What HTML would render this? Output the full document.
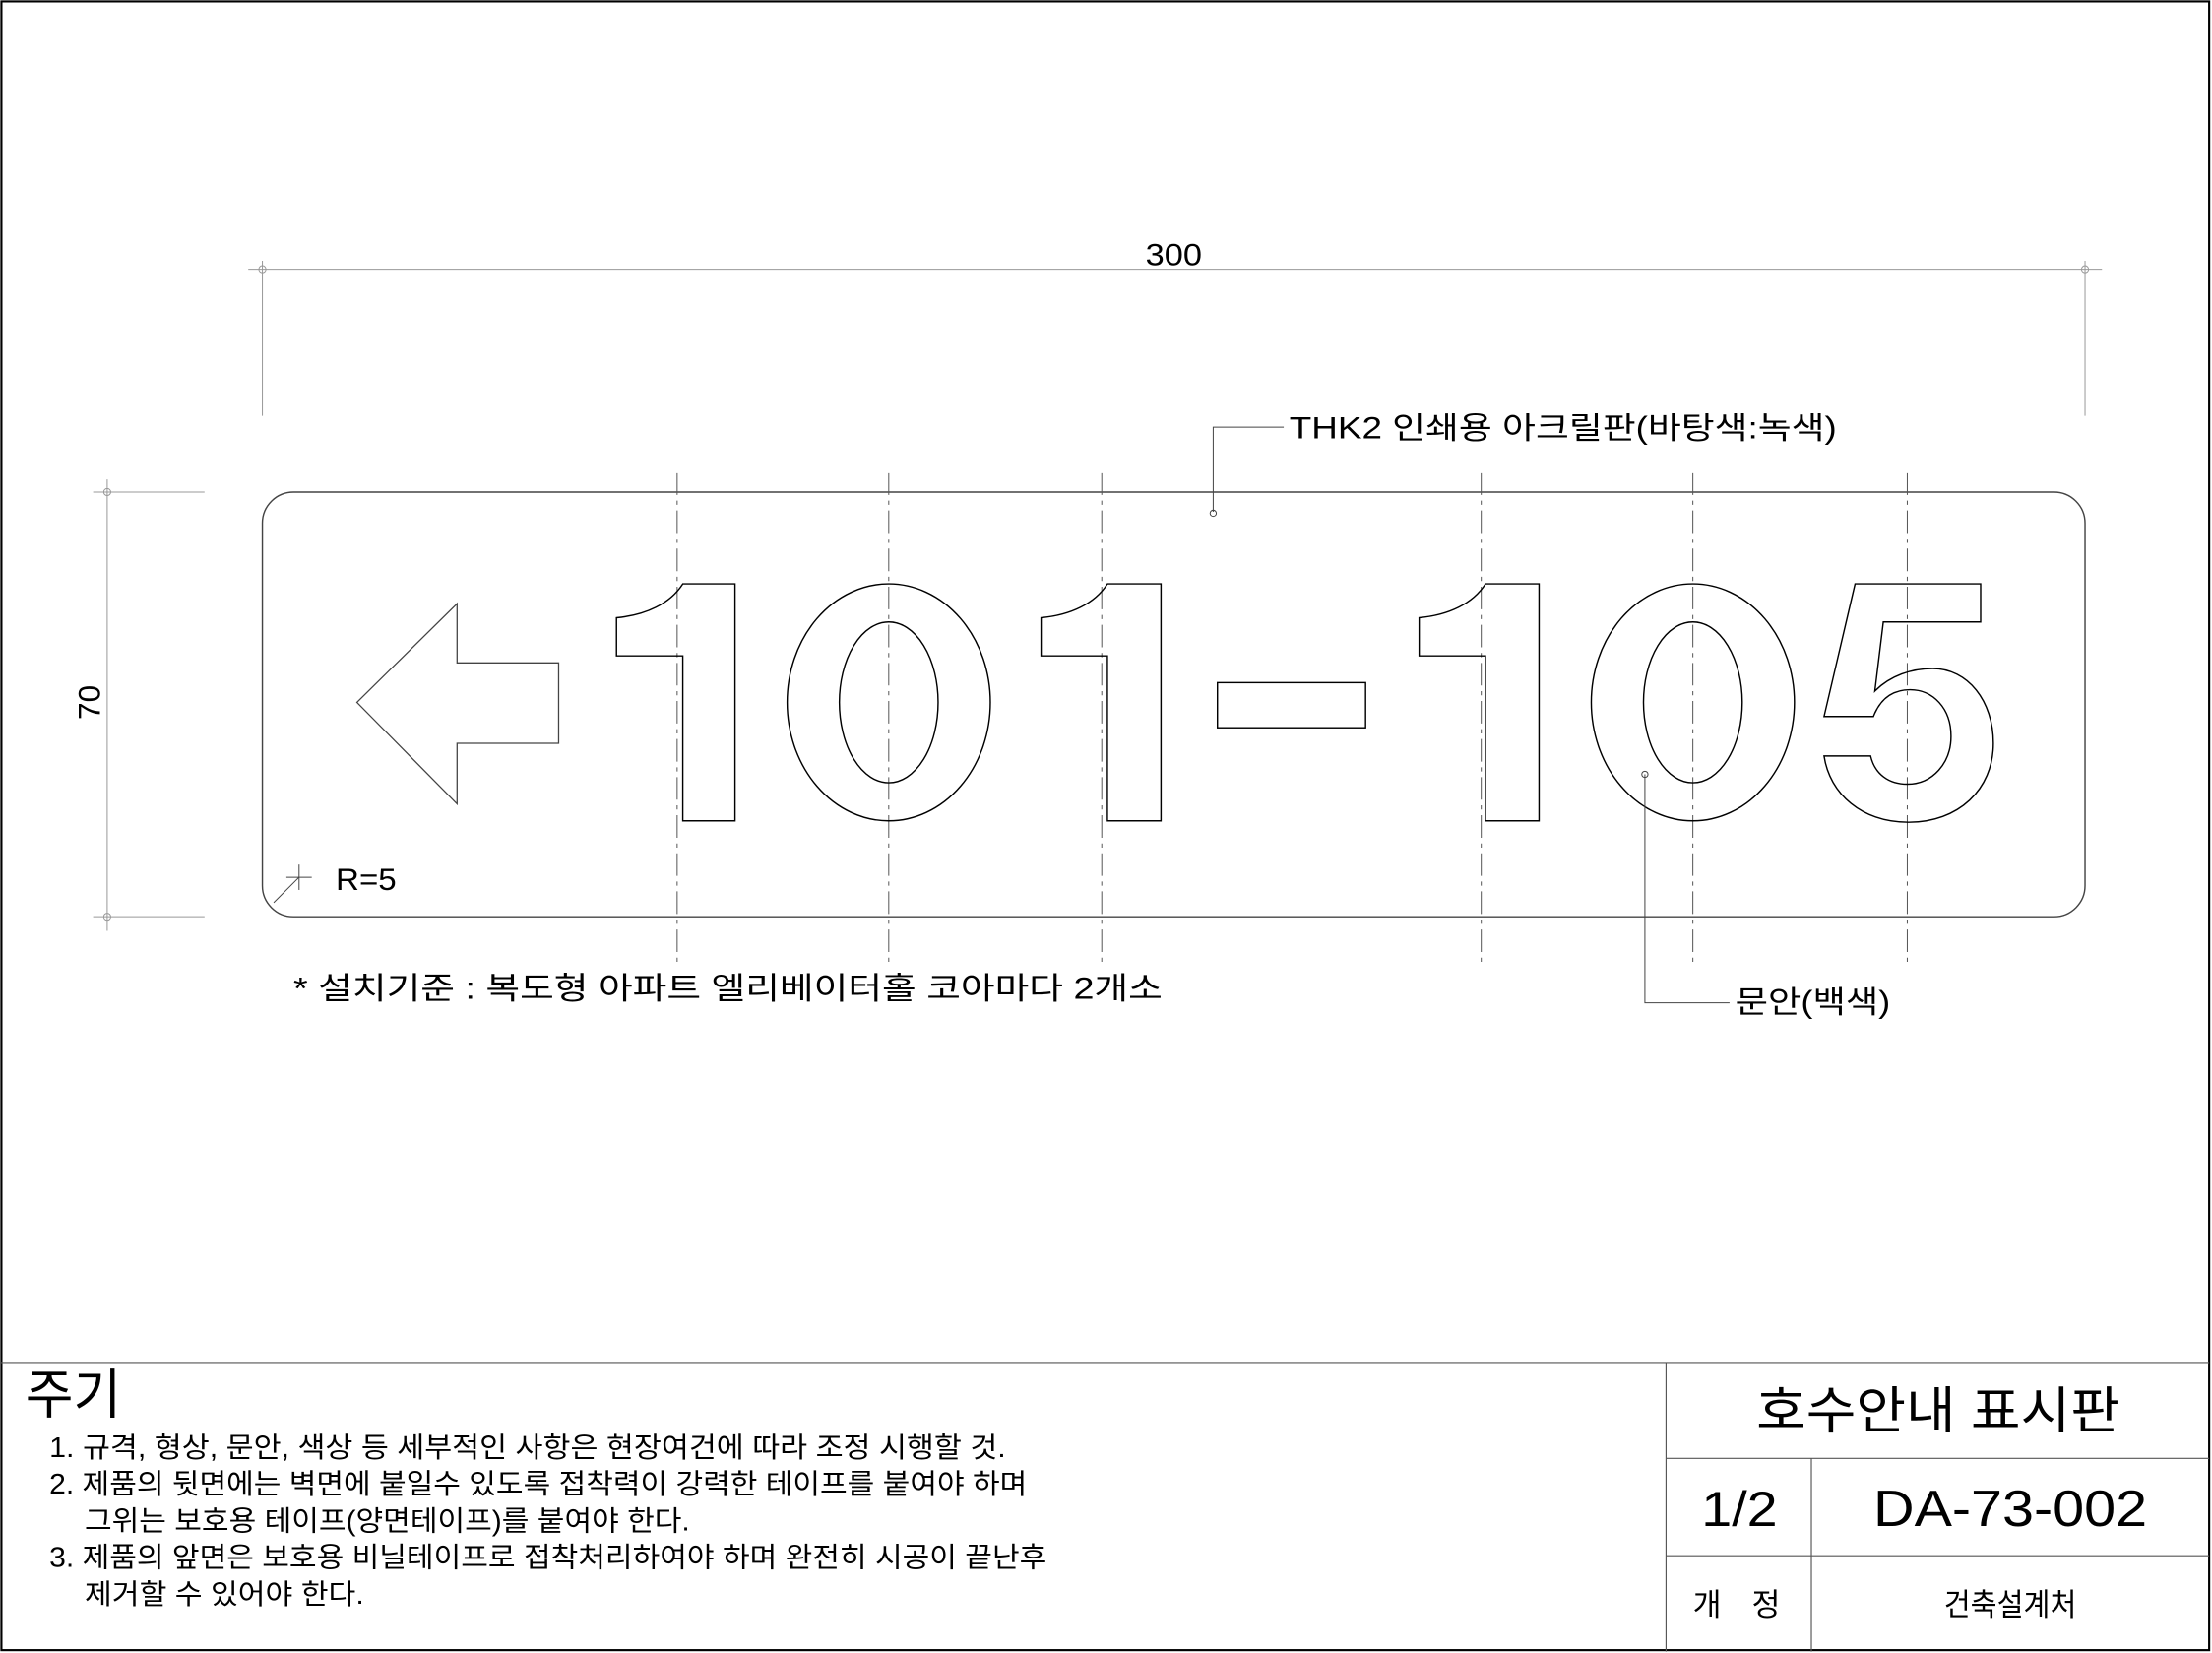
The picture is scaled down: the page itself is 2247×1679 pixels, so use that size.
<!DOCTYPE html>
<html><head><meta charset="utf-8"><style>
html,body{margin:0;padding:0;background:#fff}
svg{display:block}
text{font-family:"Liberation Sans","Noto Sans CJK KR",sans-serif;fill:#000}
</style></head><body>
<svg width="2247" height="1679" viewBox="0 0 1568 1172" preserveAspectRatio="none" xmlns="http://www.w3.org/2000/svg">
<rect x="0" y="0" width="1568" height="1172" fill="#fff"/>
<rect x="1" y="1" width="1565" height="1169" fill="none" stroke="#000" stroke-width="1.5"/>
<g stroke="#555" stroke-width="0.8" fill="none">
<line x1="0" y1="966" x2="1566" y2="966"/>
<line x1="1181" y1="966" x2="1181" y2="1171"/>
<line x1="1181" y1="1034" x2="1566" y2="1034"/>
<line x1="1181" y1="1103" x2="1566" y2="1103"/>
<line x1="1284" y1="1034" x2="1284" y2="1171"/>
</g>
<g stroke="#999" stroke-width="0.7" fill="none">
<line x1="176" y1="191" x2="1490" y2="191"/>
<line x1="186" y1="185" x2="186" y2="295"/>
<line x1="1478" y1="185" x2="1478" y2="295"/>
<circle cx="186" cy="191" r="2.5"/><circle cx="1478" cy="191" r="2.5"/>
<line x1="76" y1="340" x2="76" y2="660"/>
<line x1="66" y1="349" x2="145" y2="349"/>
<line x1="66" y1="650" x2="145" y2="650"/>
<circle cx="76" cy="349" r="2.5"/><circle cx="76" cy="650" r="2.5"/>
</g>
<text x="812" y="188" font-size="22" textLength="40" lengthAdjust="spacingAndGlyphs">300</text>
<text x="0" y="0" font-size="22" text-anchor="middle" transform="translate(71,498) rotate(-90)">70</text>
<rect x="186" y="349" width="1292" height="301" rx="22" ry="22" fill="none" stroke="#444" stroke-width="1"/>
<g stroke="#555" stroke-width="0.7" stroke-dasharray="16,4,3,4">
<line x1="480" y1="335" x2="480" y2="682"/>
<line x1="630" y1="335" x2="630" y2="682"/>
<line x1="781" y1="335" x2="781" y2="682"/>
<line x1="1050" y1="335" x2="1050" y2="682"/>
<line x1="1200" y1="335" x2="1200" y2="682"/>
<line x1="1352" y1="335" x2="1352" y2="682"/>
</g>
<path d="M253,498 L324,428 V470 H396 V527 H324 V570 Z" fill="none" stroke="#444" stroke-width="0.9"/>
<g fill="none" stroke="#000" stroke-width="1">
<path d="M484,414 H521 V582 H484 V465 H437 V438 C458,436 475,428 484,414 Z"/>
<path d="M785,414 H823 V582 H785 V465 H738 V438 C759,436 776,428 785,414 Z"/>
<path d="M1053,414 H1091 V582 H1053 V465 H1006 V438 C1027,436 1044,428 1053,414 Z"/>
<ellipse cx="630" cy="498" rx="72" ry="84"/>
<ellipse cx="630" cy="498" rx="35" ry="57"/>
<ellipse cx="1200" cy="498" rx="72" ry="84"/>
<ellipse cx="1200" cy="498" rx="35" ry="57"/>
<rect x="863" y="484" width="105" height="32"/>
<path d="M1315,414 H1404 V441 H1335 L1329,490 C1340,479 1355,474 1370,474 C1395,474 1413,497 1413,527 C1413,560 1388,583 1353,583 C1320,583 1297,563 1293,536 H1326 C1329,549 1339,556 1352,556 C1370,556 1383,541 1383,522 C1383,502 1370,489 1354,489 C1342,489 1333,495 1328,508 H1293 Z"/>
</g>
<g stroke="#444" stroke-width="0.7" fill="none">
<polyline points="860,363 860,303 910,303"/>
<circle cx="860" cy="364" r="2.2"/>
<polyline points="1166,549 1166,711 1226,711"/>
<circle cx="1166" cy="549" r="2.2"/>
<line x1="203" y1="622" x2="221" y2="622"/>
<line x1="212" y1="613" x2="212" y2="631"/>
<line x1="212" y1="622" x2="194" y2="640"/>
</g>
<text x="914" y="311" font-size="22" textLength="388" lengthAdjust="spacingAndGlyphs">THK2 인쇄용 아크릴판(바탕색:녹색)</text>
<text x="1230" y="718" font-size="22" textLength="110" lengthAdjust="spacingAndGlyphs">문안(백색)</text>
<text x="238" y="631" font-size="22" textLength="43" lengthAdjust="spacingAndGlyphs">R=5</text>
<text x="208" y="708" font-size="22" textLength="616" lengthAdjust="spacingAndGlyphs">* 설치기준 : 복도형 아파트 엘리베이터홀 코아마다 2개소</text>
<text x="18" y="1002" font-size="38" textLength="68" lengthAdjust="spacingAndGlyphs">주기</text>
<g font-size="20">
<text x="35" y="1033" textLength="678" lengthAdjust="spacingAndGlyphs">1. 규격, 형상, 문안, 색상 등 세부적인 사항은 현장여건에 따라 조정 시행할 것.</text>
<text x="35" y="1059" textLength="693" lengthAdjust="spacingAndGlyphs">2. 제품의 뒷면에는 벽면에 붙일수 있도록 접착력이 강력한 테이프를 붙여야 하며</text>
<text x="60" y="1085" textLength="429" lengthAdjust="spacingAndGlyphs">그위는 보호용 테이프(양면테이프)를 붙여야 한다.</text>
<text x="35" y="1111" textLength="707" lengthAdjust="spacingAndGlyphs">3. 제품의 앞면은 보호용 비닐테이프로 접착처리하여야 하며 완전히 시공이 끝난후</text>
<text x="60" y="1137" textLength="198" lengthAdjust="spacingAndGlyphs">제거할 수 있어야 한다.</text>
</g>
<text x="1245" y="1013" font-size="36" textLength="258" lengthAdjust="spacingAndGlyphs">호수안내 표시판</text>
<text x="1206" y="1082" font-size="35" textLength="54" lengthAdjust="spacingAndGlyphs">1/2</text>
<text x="1328" y="1082" font-size="36" textLength="194" lengthAdjust="spacingAndGlyphs">DA-73-002</text>
<text x="1200" y="1145" font-size="22" textLength="62" lengthAdjust="spacing">개 정</text>
<text x="1378" y="1145" font-size="22" textLength="94" lengthAdjust="spacingAndGlyphs">건축설계처</text>
</svg>
</body></html>
